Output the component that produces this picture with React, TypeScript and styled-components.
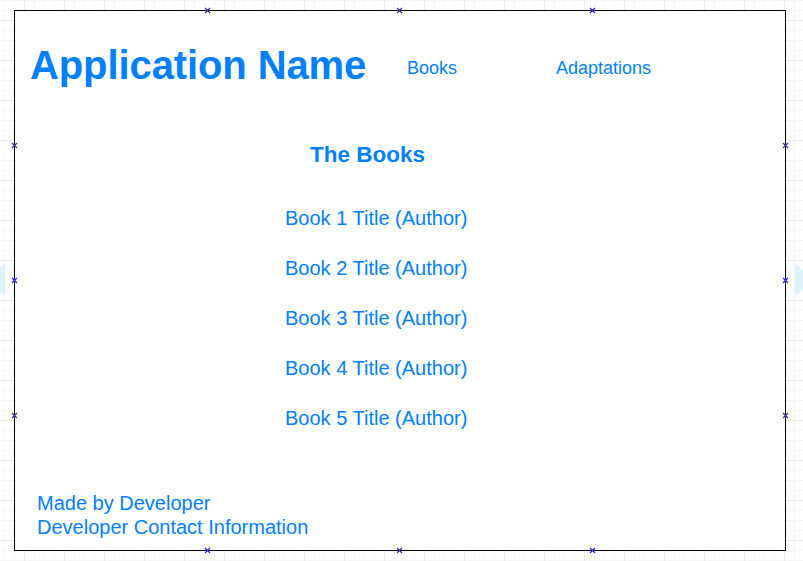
import React from "react";
import styled, { createGlobalStyle } from "styled-components";

const GlobalStyle = createGlobalStyle`
  html, body {
    margin: 0;
    padding: 0;
    height: 100%;
  }
  body {
    overflow: hidden;
    font-family: "Liberation Sans", Arial, Helvetica, sans-serif;
    background-color: #ffffff;
    background-image:
      linear-gradient(to right, #ebebeb 1px, transparent 1px),
      linear-gradient(to bottom, #ebebeb 1px, transparent 1px),
      linear-gradient(to right, #f6f6f6 1px, transparent 1px),
      linear-gradient(to bottom, #f6f6f6 1px, transparent 1px);
    background-size: 40px 40px, 40px 40px, 10px 10px, 10px 10px;
    background-position: 24px 20px, 24px 20px, 4px 0, 4px 0;
  }
  #root {
    position: relative;
    width: 803px;
    height: 561px;
    overflow: hidden;
  }
`;

const BLUE = "#007fff";

const Canvas = styled.div`
  position: relative;
  width: 803px;
  height: 561px;
  padding-top: 10px;
  padding-left: 14px;
  box-sizing: border-box;
`;

const Frame = styled.div`
  position: relative;
  box-sizing: border-box;
  width: 772px;
  height: 541px;
  background: #ffffff;
  border: 1px solid #000000;
  display: flex;
  flex-direction: column;
  color: ${BLUE};
`;

const Header = styled.header`
  display: grid;
  grid-template-columns: 377px 149px 149px;
  align-items: start;
  padding: 31px 0 0 15px;
`;

const AppTitle = styled.h1`
  margin: 0;
  font-size: 40px;
  line-height: 46px;
  font-weight: 700;
  letter-spacing: -0.1px;
  white-space: nowrap;
`;

const NavLink = styled.a`
  margin-top: 16px;
  font-size: 18px;
  line-height: 21px;
  color: ${BLUE};
  text-decoration: none;
  white-space: nowrap;
`;

const Main = styled.main`
  display: flex;
  flex-direction: column;
  align-items: flex-start;
  padding: 54px 0 0 270px;
`;

const SectionTitle = styled.h2`
  margin: 0 0 0 25px;
  font-size: 22.5px;
  line-height: 26px;
  font-weight: 700;
`;

const BookList = styled.ul`
  list-style: none;
  margin: 25px 0 0;
  padding: 0;
`;

const BookItem = styled.li`
  height: 50px;
  font-size: 20px;
  line-height: 50px;
  white-space: nowrap;
`;

const Footer = styled.footer`
  margin-top: auto;
  padding: 0 0 11px 22px;
  font-size: 20px;
  line-height: 24px;
`;

const FooterLine = styled.div`
  white-space: nowrap;
`;

const MarkerLayer = styled.div`
  position: absolute;
  inset: -1px;
  pointer-events: none;
`;

const MarkerBox = styled.svg<{ $x: number; $y: number }>`
  position: absolute;
  left: ${(p) => p.$x - 3}px;
  top: ${(p) => p.$y - 3}px;
  width: 7px;
  height: 7px;
  overflow: visible;
`;

const Marker = ({ x, y, dark }: { x: number; y: number; dark?: boolean }) => (
  <MarkerBox $x={x} $y={y} viewBox="0 0 7 7">
    <path
      d="M1 1 L6 6 M6 1 L1 6"
      stroke={dark ? "#2b2bb0" : "#1f1fff"}
      strokeWidth="1.1"
      fill="none"
    />
  </MarkerBox>
);

const HoverArrow = styled.svg<{ $left: number }>`
  position: absolute;
  top: 262px;
  left: ${(p) => p.$left}px;
  width: 20px;
  height: 36px;
  pointer-events: none;
`;

const markers: { x: number; y: number; dark?: boolean }[] = [
  { x: 193, y: 0, dark: true },
  { x: 385, y: 0, dark: true },
  { x: 578, y: 0 },
  { x: 193, y: 540 },
  { x: 385, y: 540, dark: true },
  { x: 578, y: 540 },
  { x: 0, y: 135, dark: true },
  { x: 0, y: 270 },
  { x: 0, y: 405, dark: true },
  { x: 771, y: 135, dark: true },
  { x: 771, y: 270 },
  { x: 771, y: 405, dark: true },
];

const books = [1, 2, 3, 4, 5];

export default function App() {
  return (
    <>
      <GlobalStyle />
      <Canvas>
        <HoverArrow $left={-15} viewBox="0 0 20 36">
          <path d="M0 18 L20 2 L20 34 Z" fill="#d9f1fb" opacity="0.9" />
        </HoverArrow>
        <HoverArrow $left={795} viewBox="0 0 20 36">
          <path d="M20 18 L0 2 L0 34 Z" fill="#d9f1fb" opacity="0.9" />
        </HoverArrow>
        <Frame>
          <Header>
            <AppTitle>Application Name</AppTitle>
            <NavLink>Books</NavLink>
            <NavLink>Adaptations</NavLink>
          </Header>
          <Main>
            <SectionTitle>The Books</SectionTitle>
            <BookList>
              {books.map((n) => (
                <BookItem key={n}>Book {n} Title (Author)</BookItem>
              ))}
            </BookList>
          </Main>
          <Footer>
            <FooterLine>Made by Developer</FooterLine>
            <FooterLine>Developer Contact Information</FooterLine>
          </Footer>
          <MarkerLayer>
            {markers.map((m, i) => (
              <Marker key={i} x={m.x} y={m.y} dark={m.dark} />
            ))}
          </MarkerLayer>
        </Frame>
      </Canvas>
    </>
  );
}
